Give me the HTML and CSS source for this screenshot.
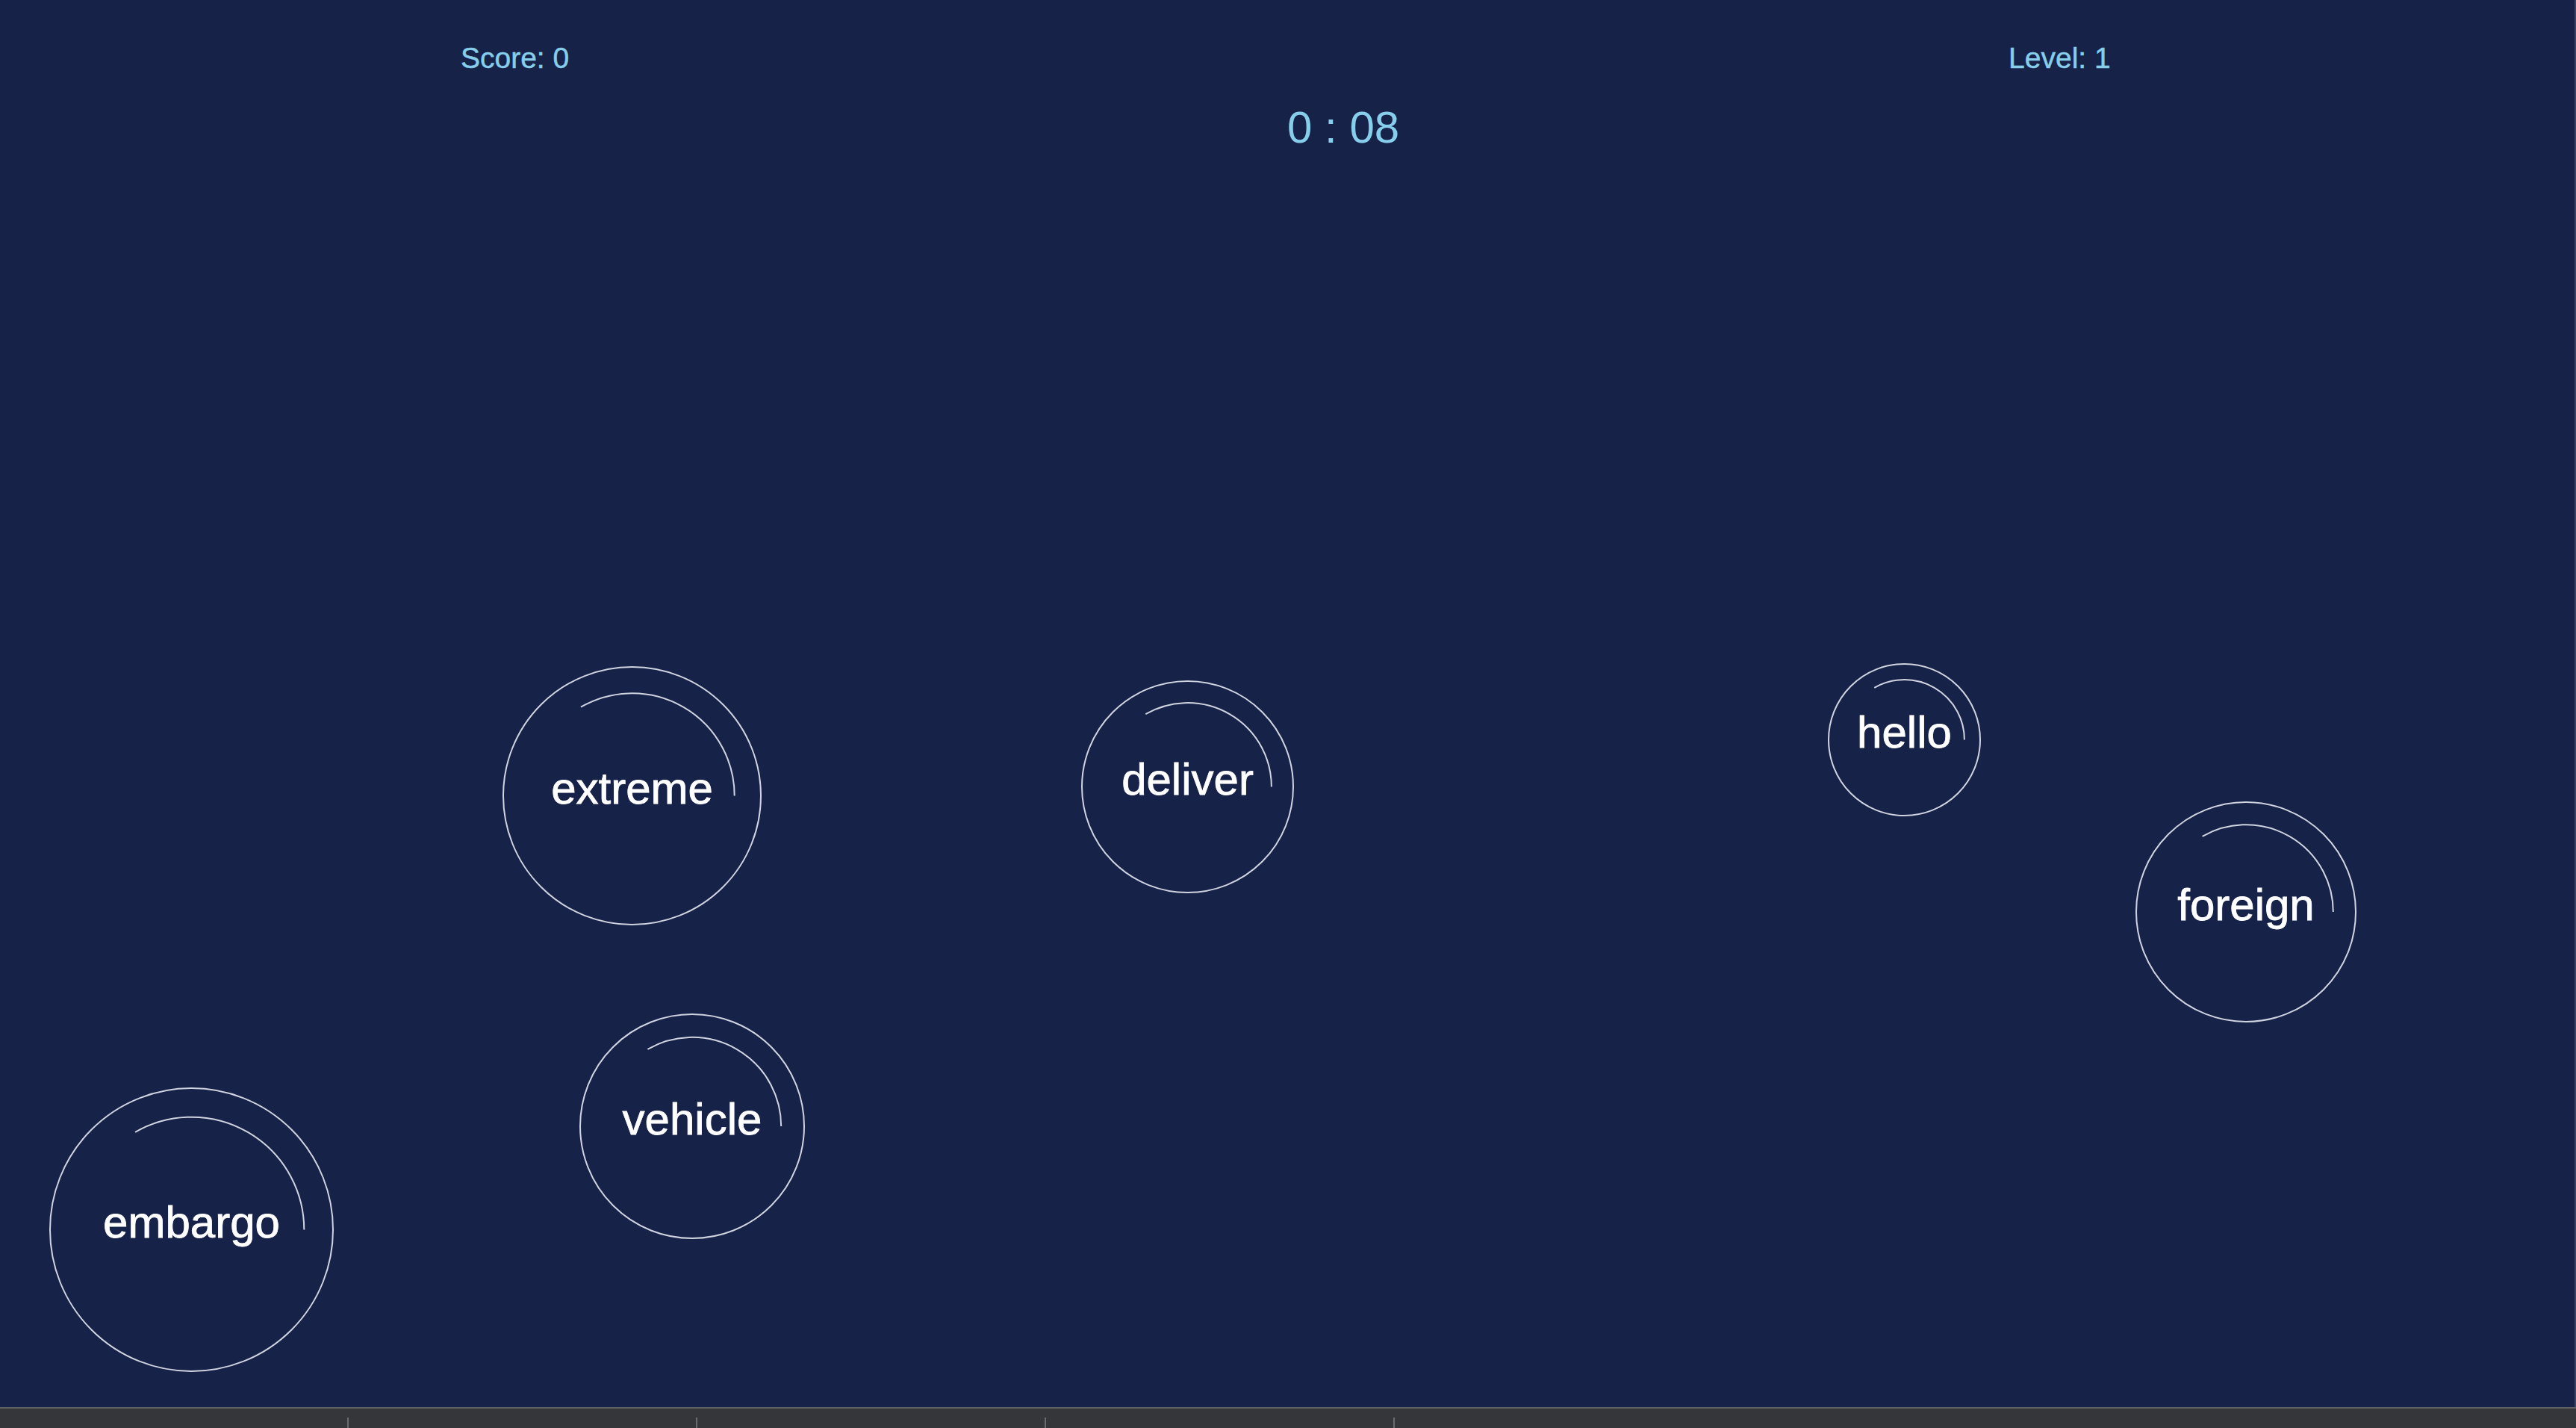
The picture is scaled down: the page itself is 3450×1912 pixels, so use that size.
FILE: index.html
```html
<!DOCTYPE html>
<html lang="en">
<head>
<meta charset="utf-8">
<title>Word Bubbles</title>
<link rel="stylesheet" href="styles.css">
</head>
<body>
<div class="app">
  <main class="game">
    <header class="hud">
      <div class="stat">Score: 0</div>
      <div class="stat">Level: 1</div>
    </header>
    <div class="timer">0 : 08</div>

    <div class="bubble" style="left:673px;top:892px;width:347px;height:347px">
      <svg class="arc" viewBox="0 0 100 100"><path d="M30 15.36 A40 40 0 0 1 90 50"/></svg>
      <span class="word">extreme</span>
    </div>
    <div class="bubble" style="left:1448px;top:911px;width:285px;height:285px">
      <svg class="arc" viewBox="0 0 100 100"><path d="M30 15.36 A40 40 0 0 1 90 50"/></svg>
      <span class="word">deliver</span>
    </div>
    <div class="bubble" style="left:2448px;top:888px;width:205px;height:205px">
      <svg class="arc" viewBox="0 0 100 100"><path d="M30 15.36 A40 40 0 0 1 90 50"/></svg>
      <span class="word">hello</span>
    </div>
    <div class="bubble" style="left:2860px;top:1073px;width:296px;height:296px">
      <svg class="arc" viewBox="0 0 100 100"><path d="M30 15.36 A40 40 0 0 1 90 50"/></svg>
      <span class="word">foreign</span>
    </div>
    <div class="bubble" style="left:776px;top:1357px;width:302px;height:302px">
      <svg class="arc" viewBox="0 0 100 100"><path d="M30 15.36 A40 40 0 0 1 90 50"/></svg>
      <span class="word">vehicle</span>
    </div>
    <div class="bubble" style="left:66px;top:1456px;width:381px;height:381px">
      <svg class="arc" viewBox="0 0 100 100"><path d="M30 15.36 A40 40 0 0 1 90 50"/></svg>
      <span class="word">embargo</span>
    </div>
  </main>
  <footer class="bar">
    <span class="tick"></span>
    <span class="tick"></span>
    <span class="tick"></span>
    <span class="tick"></span>
  </footer>
</div>
</body>
</html>
```

FILE: styles.css
```css
html, body {
  margin: 0;
  padding: 0;
  height: 100%;
  overflow: hidden;
}

body {
  font-family: "Liberation Sans", Arial, Helvetica, sans-serif;
  background: #353639;
}

.app {
  display: flex;
  flex-direction: column;
  height: 1912px;
}

.game {
  position: relative;
  height: 1884px;
  background: #162248;
  border-right: 2px solid #3c4363;
  box-sizing: border-box;
  overflow: hidden;
}

.hud {
  display: flex;
  justify-content: space-between;
  padding-top: 56px;
}

.stat {
  width: 40%;
  text-align: center;
  font-size: 39px;
  color: #87ceeb;
  -webkit-text-stroke: 0.5px #87ceeb;
}

.timer {
  margin-top: 36px;
  padding-left: 50%;
  font-size: 60px;
  color: #87ceeb;
}

.bubble {
  position: absolute;
  box-sizing: border-box;
  border: 2px solid rgba(228, 232, 242, 0.9);
  border-radius: 50%;
  display: flex;
  align-items: center;
  justify-content: center;
}

.arc {
  position: absolute;
  inset: 0;
  width: 100%;
  height: 100%;
  overflow: visible;
}

.arc path {
  fill: none;
  stroke: rgba(228, 232, 242, 0.9);
  stroke-width: 2;
  vector-effect: non-scaling-stroke;
}

.word {
  position: relative;
  font-size: 60px;
  color: #ffffff;
  -webkit-text-stroke: 0.8px #ffffff;
  margin-bottom: 20px;
  white-space: nowrap;
}

.bar {
  flex: 1;
  display: flex;
  align-items: flex-end;
  padding-left: 465px;
  gap: 465px;
  background: #353639;
  border-top: 2px solid #616165;
}

.tick {
  width: 2px;
  height: 14px;
  background: #6a6a6f;
}
```
